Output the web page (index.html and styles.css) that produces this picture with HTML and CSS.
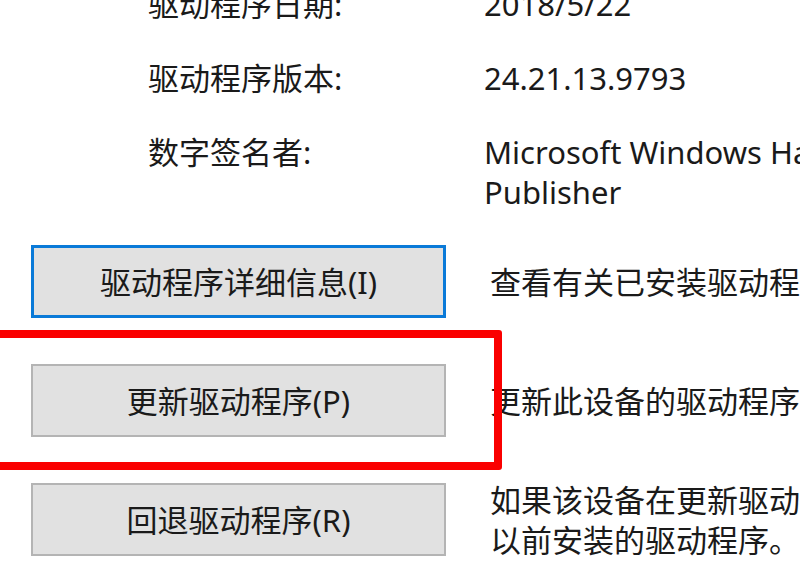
FILE: index.html
```html
<!DOCTYPE html>
<html lang="zh-CN">
<head>
<meta charset="utf-8">
<title>驱动程序</title>
<link rel="stylesheet" href="styles.css">
</head>
<body>
<div class="page">
  <div class="info">
    <div class="label">驱动程序日期:</div>
    <div class="value">2018/5/22</div>
    <div class="label">驱动程序版本:</div>
    <div class="value">24.21.13.9793</div>
    <div class="label">数字签名者:</div>
    <div class="value">Microsoft Windows Hardware Compatibility<br>Publisher</div>
  </div>
  <div class="actions">
    <div class="btn btn-focus">驱动程序详细信息(I)</div>
    <div class="desc">查看有关已安装驱动程序文件的详细信息。</div>
    <div class="btn">更新驱动程序(P)</div>
    <div class="desc">更新此设备的驱动程序。</div>
    <div class="btn">回退驱动程序(R)</div>
    <div class="desc">如果该设备在更新驱动程序后失败，回退到<br>以前安装的驱动程序。</div>
  </div>
  <div class="highlight"></div>
</div>
</body>
</html>
```

FILE: styles.css
```css
html, body {
  margin: 0;
  padding: 0;
  background: #ffffff;
}
body {
  width: 800px;
  height: 584px;
  overflow: hidden;
  font-family: "Noto Sans", "Noto Sans CJK SC", sans-serif;
  font-size: 31px;
  line-height: 40px;
  color: #1a1a1a;
}
.page {
  position: relative;
  display: flow-root;
  width: 800px;
  height: 584px;
}
.info {
  display: grid;
  grid-template-columns: 336px max-content;
  row-gap: 34px;
  padding-left: 148px;
  margin-top: -16px;
  white-space: nowrap;
}
.actions {
  display: grid;
  grid-template-columns: 415px max-content;
  column-gap: 44px;
  row-gap: 46px;
  align-items: center;
  padding-left: 31px;
  margin-top: 33px;
  white-space: nowrap;
}
.btn {
  box-sizing: border-box;
  height: 73px;
  display: flex;
  align-items: center;
  justify-content: center;
  background: #e1e1e1;
  border: 2px solid #b4b4b4;
  color: #1a1a1a;
}
.btn-focus {
  border: 3px solid #0a7ad8;
}
.desc {
  color: #1a1a1a;
  margin: -4px 0;
}
.highlight {
  position: absolute;
  left: -12px;
  top: 330px;
  width: 514px;
  height: 140px;
  box-sizing: border-box;
  border: 8px solid #fa0000;
  border-radius: 3px;
}
```
